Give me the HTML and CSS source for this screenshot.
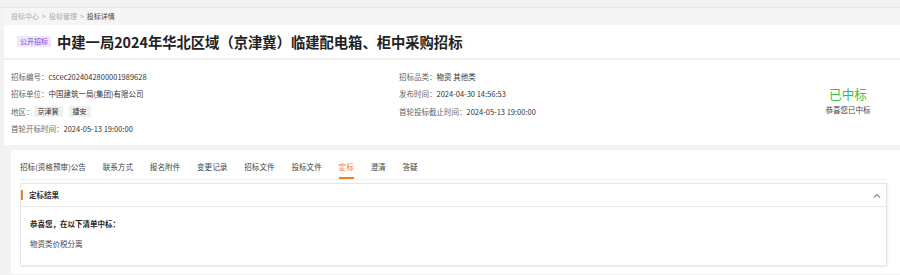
FILE: index.html
```html
<!DOCTYPE html>
<html lang="zh-CN">
<head>
    <meta charset="UTF-8">
    <title>投标详情</title>
    <link rel="stylesheet" href="styles.css">
</head>
<body>
    <div class="topbar"></div>
    <div class="page">
        <div class="breadcrumb">
            <span>投标中心</span><span class="sep">&gt;</span><span>投标管理</span><span class="sep">&gt;</span><span class="current">投标详情</span>
        </div>

        <div class="title-card">
            <span class="tag-purple">公开招标</span>
            <h1>中建一局2024年华北区域（京津冀）临建配电箱、柜中采购招标</h1>
        </div>

        <div class="info-card">
            <div class="info-col">
                <div class="info-row"><span class="label">招标编号：</span>cscec2024042800001989628</div>
                <div class="info-row"><span class="label">招标单位：</span>中国建筑一局(集团)有限公司</div>
                <div class="info-row"><span class="label">地区：</span><span class="area-tag">京津冀</span><span class="area-tag">捷安</span></div>
                <div class="info-row"><span class="label">首轮开标时间：</span>2024-05-13 19:00:00</div>
            </div>
            <div class="info-col">
                <div class="info-row"><span class="label">招标品类：</span>物资 其他类</div>
                <div class="info-row"><span class="label">发布时间：</span>2024-04-30 14:56:53</div>
                <div class="info-row"><span class="label">首轮投标截止时间：</span>2024-05-13 19:00:00</div>
            </div>
            <div class="status">
                <div class="status-big">已中标</div>
                <div class="status-small">恭喜您已中标</div>
            </div>
        </div>

        <div class="tab-card">
            <div class="tabs">
                <span class="tab">招标(资格预审)公告</span>
                <span class="tab">联系方式</span>
                <span class="tab">报名附件</span>
                <span class="tab">变更记录</span>
                <span class="tab">招标文件</span>
                <span class="tab">投标文件</span>
                <span class="tab active">定标</span>
                <span class="tab">澄清</span>
                <span class="tab">答疑</span>
            </div>

            <div class="panel">
                <div class="panel-head">
                    <span class="panel-title">定标结果</span>
                    <svg class="chevron" width="8" height="5" viewBox="0 0 8 5"><polyline points="1,4.5 4,1.5 7,4.5" fill="none" stroke="#888" stroke-width="1.1"/></svg>
                </div>
                <div class="panel-body">
                    <div class="win-title">恭喜您，在以下清单中标：</div>
                    <div class="win-item">物资类价税分离</div>
                </div>
            </div>
        </div>
    </div>
</body>
</html>
```

FILE: styles.css
```css
body {
    margin: 0;
    background-color: #f2f2f2;
    font-family: "Noto Sans CJK SC", "Noto Sans", sans-serif;
    color: #333;
}
.topbar {
    height: 7px;
    border-bottom: 1px solid #e4e4e4;
}
.page {
    padding-left: 4px;
}
.breadcrumb {
    height: 17px;
    line-height: 17px;
    padding-left: 7px;
    font-size: 7px;
    color: #aaa;
    background-color: #f5f5f5;
}
.breadcrumb .sep {
    margin: 0 3px;
}
.breadcrumb .current {
    color: #444;
}
.title-card {
    height: 33px;
    display: flex;
    align-items: center;
    padding-left: 13px;
    background-color: white;
    border-bottom: 2px solid #efefef;
}
.tag-purple {
    font-size: 7px;
    color: #7a3fd8;
    background-color: #efe6fd;
    padding: 1px 3px;
    line-height: 9px;
    margin-right: 6px;
}
h1 {
    margin: 0;
    font-size: 14.3px;
    font-weight: bold;
    color: #222;
}
.info-card {
    height: 77px;
    padding: 8px 0 0 7px;
    display: flex;
    background-color: white;
}
.info-col {
    width: 388px;
}
.info-row {
    height: 17.3px;
    display: flex;
    align-items: center;
    font-size: 7.5px;
    color: #333;
}
.label {
    color: #666;
}
.area-tag {
    background-color: #f0f0f0;
    padding: 0 4px;
    line-height: 11px;
    margin-right: 6px;
    font-size: 7px;
}
.status {
    flex: 1;
    padding-top: 17px;
    padding-left: 9px;
    text-align: center;
}
.status-big {
    font-size: 12.6px;
    line-height: 18px;
    color: #33c23a;
}
.status-small {
    font-size: 7.5px;
    line-height: 14px;
    color: #444;
}
.tab-card {
    margin-top: 5px;
    margin-left: 7px;
    padding: 0 13px 8px 9px;
    background-color: white;
}
.tabs {
    display: flex;
    gap: 16.8px;
    border-bottom: 1px solid #eee;
}
.tab {
    font-size: 7.6px;
    line-height: 12px;
    padding: 11px 0 4px;
    border-bottom: 2px solid transparent;
    color: #444;
}
.tab.active {
    color: #f0821e;
    border-bottom-color: #f0821e;
}
.panel {
    margin-top: 3px;
    border: 1px solid #e6e6e6;
    box-shadow: 1px 1px 2px rgba(0, 0, 0, 0.08);
}
.panel-head {
    height: 22px;
    display: flex;
    align-items: center;
    justify-content: space-between;
    padding-right: 5px;
    border-bottom: 1px solid #e8e8e8;
}
.panel-title {
    font-size: 7.5px;
    font-weight: bold;
    border-left: 2px solid #f0821e;
    padding-left: 6px;
    line-height: 10px;
}
.panel-body {
    padding: 11px 9px 15px;
    font-size: 7.5px;
}
.win-title {
    font-weight: bold;
    line-height: 12px;
    color: #222;
}
.win-item {
    margin-top: 8px;
    line-height: 12px;
    color: #444;
}
```
